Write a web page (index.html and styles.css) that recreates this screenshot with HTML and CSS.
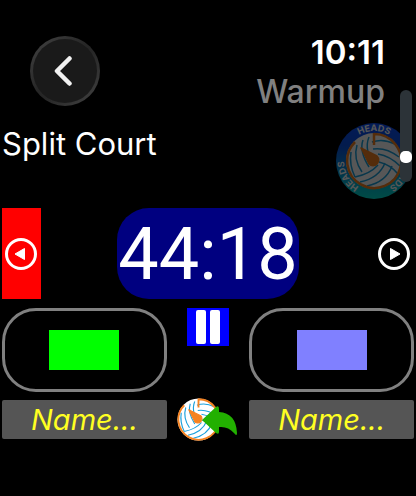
FILE: index.html
```html
<!DOCTYPE html>
<html lang="en">
<head>
<meta charset="utf-8">
<meta name="viewport" content="width=device-width, initial-scale=1">
<title>Warmup</title>
<link rel="stylesheet" href="styles.css">
</head>
<body>
<svg class="defs" aria-hidden="true">
  <defs>
    <linearGradient id="ring" x1="0" y1="0" x2="0" y2="1">
      <stop offset="0" stop-color="#0a50ff"/>
      <stop offset="0.3" stop-color="#0a50e0"/>
      <stop offset="1" stop-color="#00e0d0"/>
    </linearGradient>
    <path id="arc" d="M-30 0A30 30 0 0 1 30 0"/>
    <symbol id="ball" viewBox="-30 -30 60 60">
      <circle r="28" fill="#fff"/>
      <g class="seams">
        <path d="M-23-9Q-25 4-19 16M-17-16Q-21-2-12 11M-11-21Q-15-10-5 6M-5-24Q-8-17-6-9"/>
        <path d="M-2-19Q9-23 21-17M-1-12Q12-14 25-4M4-7Q16-5 26 5"/>
        <path d="M-19 16Q-4 13 4 4M-14 21Q5 17 11 2M-7 25Q12 21 18 5M5 1Q17 4 24 13"/>
      </g>
      <path class="rim" d="M0-27A27 27 0 1 1-19-19M0-28V-16"/>
      <path fill="#f58220" stroke="#f58220" stroke-width="1.500" stroke-linejoin="round" d="M-13-13L3-5A5 5 0 1 1-5 3Z"/>
    </symbol>
  </defs>
</svg>
<main class="screen">
  <header class="header">
    <button class="back" type="button" aria-label="Back">
      <svg width="24" height="30" viewBox="0 0 24 30"><path d="M16.500 2.500L4 15L16.500 27.500"/></svg>
    </button>
    <div class="status">
      <time>10:11</time>
      <h1>Warmup</h1>
    </div>
  </header>

  <section class="title">
    <h2>Split Court</h2>
    <svg class="logo" viewBox="-38 -38 76 76" role="img" aria-label="Heads volleyball">
      <circle r="38" fill="url(#ring)"/>
      <use href="#ball" x="-30" y="-30" width="60" height="60"/>
      <g class="logo-text">
        <text><textPath href="#arc" startOffset="50%">HEADS</textPath></text>
        <text transform="rotate(120)"><textPath href="#arc" startOffset="50%">HEADS</textPath></text>
        <text transform="rotate(240)"><textPath href="#arc" startOffset="50%">HEADS</textPath></text>
      </g>
    </svg>
  </section>

  <section class="clock">
    <button class="side serving" type="button" aria-label="Serve left">
      <svg width="32" height="32" viewBox="0 0 32 32"><circle cx="16" cy="16" r="14.500"/><path d="M10 16L19.500 10.500V21.500Z"/></svg>
    </button>
    <button class="timer" type="button">44:18</button>
    <button class="side" type="button" aria-label="Serve right">
      <svg width="32" height="32" viewBox="0 0 32 32"><circle cx="16" cy="16" r="14.500"/><path d="M22 16L12.500 10.500V21.500Z"/></svg>
    </button>
  </section>

  <section class="teams">
    <button class="card" type="button" aria-label="Left team colour"><span class="swatch green"></span></button>
    <button class="pause" type="button" aria-label="Pause">
      <svg width="24" height="34" viewBox="0 0 24 34"><rect width="10" height="34" rx="2"/><rect x="14" width="10" height="34" rx="2"/></svg>
    </button>
    <button class="card" type="button" aria-label="Right team colour"><span class="swatch violet"></span></button>
    <input class="name" type="text" placeholder="Name..." aria-label="Left team name">
    <button class="undo" type="button" aria-label="Undo">
      <svg width="60" height="42" viewBox="0 0 60 42">
        <use href="#ball" x="-2" y="-2" width="45" height="45"/>
        <path fill="#22b000" d="M24 21L38 8Q41 6 41 10V13Q58 14 59 34Q59 38 56 34Q50 27 41 28V33Q41 36 38 34Z"/>
      </svg>
    </button>
    <input class="name" type="text" placeholder="Name..." aria-label="Right team name">
  </section>
  <div class="scroll"><span class="thumb"></span></div>
</main>
</body>
</html>
```
FILE: styles.css
```css
* { box-sizing: border-box; }

body {
  margin: 0;
  background: #000;
  color: #fff;
  font-family: Inter, "Liberation Sans", sans-serif;
}

button {
  display: flex;
  align-items: center;
  justify-content: center;
  margin: 0;
  padding: 0;
  border: 0;
  background: none;
  color: inherit;
  font: inherit;
}

h1, h2 { margin: 0; }

.defs {
  position: absolute;
  width: 0;
  height: 0;
}

.screen {
  position: relative;
  min-height: 100vh;
  padding: 32px 2px 0;
}

.header {
  display: flex;
  align-items: flex-start;
  justify-content: space-between;
  padding: 0 29px 0 28px;
}

.back {
  width: 70px;
  height: 70px;
  margin-top: 4px;
  border: 3px solid transparent;
  border-radius: 50%;
  background:
    linear-gradient(#1a1a1a, #1a1a1a) padding-box,
    linear-gradient(135deg, #444, #262626 45%, #262626 55%, #444) border-box;
}

.back path {
  fill: none;
  stroke: #f2f2f2;
  stroke-width: 4.500;
  stroke-linecap: round;
  stroke-linejoin: round;
}

.status {
  line-height: 40px;
  text-align: right;
}

.status time {
  display: block;
  font-size: 33px;
  font-weight: 600;
}

.status h1 {
  color: #808080;
  font-size: 32px;
  font-weight: 500;
}

.title {
  display: flex;
  align-items: flex-start;
  justify-content: space-between;
  padding: 11px 2px 9px 0;
}

.title h2 {
  font-size: 31px;
  font-weight: 400;
  line-height: 41px;
}

.logo {
  width: 76px;
  height: 76px;
  overflow: visible;
  opacity: 0.34;
}

.logo-text {
  fill: #fff;
  font-size: 9px;
  font-weight: 700;
  text-anchor: middle;
}

.seams {
  fill: none;
  stroke: #1aa0dc;
  stroke-width: 1.500;
}

.rim {
  fill: none;
  stroke: #f58220;
  stroke-width: 2.500;
}

.clock {
  display: flex;
  justify-content: space-between;
  margin-bottom: 9px;
}

.side {
  width: 39px;
  padding-right: 1px;
}

.serving { background: #f00; }

.side circle {
  fill: none;
  stroke: #fff;
  stroke-width: 3;
}

.side path {
  fill: #fff;
  stroke: #fff;
  stroke-linejoin: round;
}

.timer {
  width: 182px;
  height: 91px;
  padding-top: 3px;
  border-radius: 32px;
  background: #000080;
  font-family: Roboto, "Liberation Sans", sans-serif;
  font-size: 72px;
  line-height: 88px;
}

.teams {
  display: grid;
  grid-template-columns: 2fr 1fr 2fr;
  row-gap: 8px;
}

.card {
  height: 84px;
  border: 3px solid #808080;
  border-radius: 34px;
}

.swatch {
  width: 70px;
  height: 40px;
}

.green { background: #0f0; }

.violet { background: #8080ff; }

.pause {
  justify-self: center;
  width: 42px;
  height: 38px;
  background: #00f;
}

.pause rect { fill: #fff; }

.name {
  width: 100%;
  min-width: 0;
  height: 39px;
  margin: 0;
  padding: 0;
  border: 0;
  border-radius: 2px;
  background: #555;
  color: #ff2;
  font: italic 400 29px/39px Inter, "Liberation Sans", sans-serif;
  text-align: center;
}

.name::placeholder {
  color: #ff2;
  opacity: 1;
}

.undo {
  justify-self: center;
  align-self: end;
  height: 39px;
}

.undo svg { overflow: visible; }

.scroll {
  position: absolute;
  top: 90px;
  right: 4px;
  width: 12px;
  height: 92px;
  padding-top: 61px;
  border-radius: 6px;
  background: #2c3338;
}

.thumb {
  display: block;
  height: 12px;
  border-radius: 5px;
  background: #fff;
}
```
